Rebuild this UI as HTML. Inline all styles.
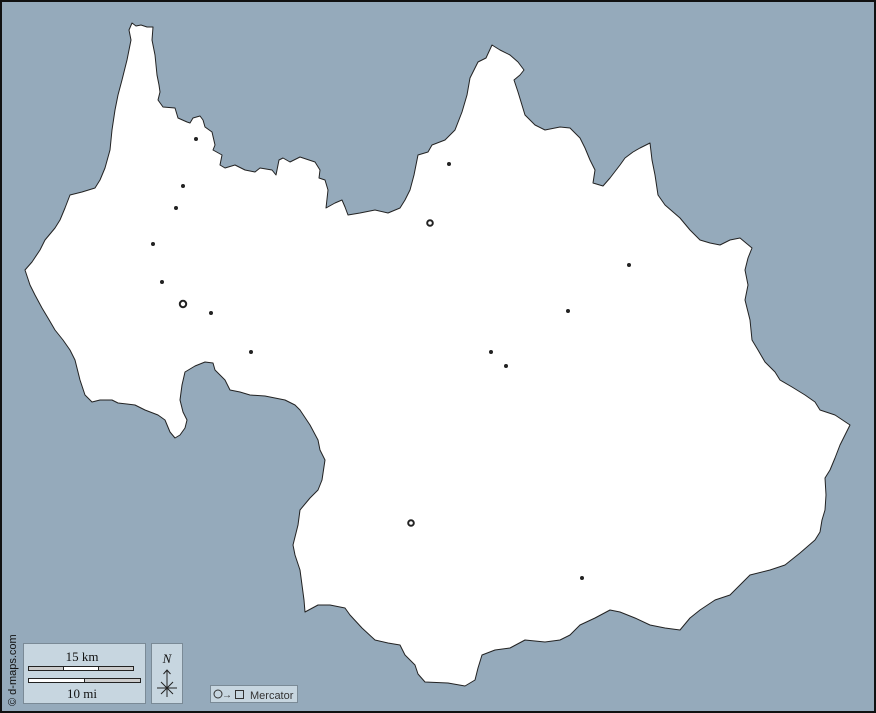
<!DOCTYPE html>
<html><head><meta charset="utf-8"><style>
html,body{margin:0;padding:0;width:876px;height:713px;overflow:hidden;background:#95aabb}
</style></head><body>
<svg width="876" height="713" viewBox="0 0 876 713" xmlns="http://www.w3.org/2000/svg" style="position:absolute;left:0;top:0">
<rect x="0" y="0" width="876" height="713" fill="#95aabb"/>
<polygon fill="#fff" stroke="#222" stroke-width="1" stroke-linejoin="round" points="
132,23 136,26 141,25 147,27 153,27 152,40 155,55 157,75 159,85 160,92 158,100 163,107 175,108 178,118 187,122 190,123 193,118 200,116 203,120 205,127 212,132 215,145 213,150 222,155 220,165 225,168 235,165 245,170 255,172 260,168 272,170 276,175 279,160 283,158 290,162 300,157 315,162 320,170 319,178 325,180 328,190 326,208 335,203 342,200 345,207 348,215 360,213 375,210 388,213 400,208 405,200 410,190 414,175 418,155 428,152 432,145 445,140 455,130 462,112 467,95 470,78 478,62 486,58 492,45 500,50 510,55 518,62 524,70 520,75 514,80 518,92 525,115 535,125 545,130 560,127 570,128 580,138 585,148 590,160 595,170 593,183 603,186 610,178 620,165 625,158 633,152 640,148 650,143 652,160 655,175 658,195 665,205 680,218 690,230 700,240 710,243 720,245 730,240 740,238 752,248 748,258 745,270 748,285 745,300 748,312 750,320 752,340 758,350 765,362 775,372 780,380 792,387 805,395 815,402 820,410 835,415 850,425 845,435 840,445 835,458 830,470 825,478 826,495 825,510 822,520 820,532 815,540 800,553 785,565 770,570 750,575 740,585 730,595 715,600 700,610 690,618 680,630 665,628 650,625 635,618 620,612 610,610 595,618 580,625 570,635 560,640 545,642 525,640 510,648 495,650 482,655 478,668 475,680 465,686 448,683 425,682 418,674 415,665 405,655 400,645 388,643 375,640 362,628 350,615 345,608 330,605 318,605 305,612 304,600 302,585 300,570 295,555 293,545 298,525 300,510 310,498 318,490 322,480 325,460 320,450 318,440 310,425 300,410 295,405 285,400 275,398 265,396 250,395 240,392 230,390 225,380 215,370 213,363 205,362 195,366 185,372 182,385 180,400 183,412 187,420 185,428 180,435 175,438 170,432 165,420 158,415 145,410 135,405 118,403 112,400 100,400 92,402 85,395 80,380 75,360 70,350 63,340 55,330 48,318 42,308 35,295 30,285 25,270 32,262 40,250 45,240 55,228 60,220 65,208 70,195 82,192 95,188 100,180 105,168 110,150 112,130 115,110 118,95 122,80 127,60 131,40 129,30
"/>
<g fill="#222">
<circle cx="196" cy="139" r="2"/><circle cx="183" cy="186" r="2"/><circle cx="176" cy="208" r="2"/><circle cx="153" cy="244" r="2"/><circle cx="162" cy="282" r="2"/><circle cx="211" cy="313" r="2"/><circle cx="251" cy="352" r="2"/><circle cx="449" cy="164" r="2"/><circle cx="629" cy="265" r="2"/><circle cx="568" cy="311" r="2"/><circle cx="491" cy="352" r="2"/><circle cx="506" cy="366" r="2"/><circle cx="582" cy="578" r="2"/>
</g>
<g fill="none" stroke="#222" stroke-width="2">
<circle cx="183" cy="304" r="3.2"/><circle cx="430" cy="223" r="2.8"/><circle cx="411" cy="523" r="2.8"/>
</g>
<rect x="1" y="1" width="874" height="711" fill="none" stroke="#111" stroke-width="2"/>
<!-- scale -->
<rect x="23.5" y="643.5" width="122" height="60" fill="#c7d6e0" stroke="#7a8a96"/>
<text x="82" y="661" font-family="Liberation Serif" font-size="13" text-anchor="middle" fill="#111">15 km</text>
<rect x="28.5" y="666.5" width="105" height="4" fill="#ccc" stroke="#222"/>
<rect x="63.5" y="666.5" width="35" height="4" fill="#fff" stroke="#222"/>
<rect x="28.5" y="678.5" width="112" height="4" fill="#ccc" stroke="#222"/>
<rect x="28.5" y="678.5" width="56" height="4" fill="#fff" stroke="#222"/>
<text x="82" y="698" font-family="Liberation Serif" font-size="13" text-anchor="middle" fill="#111">10 mi</text>
<!-- north -->
<rect x="151.5" y="643.5" width="31" height="60" fill="#c7d6e0" stroke="#7a8a96"/>
<text x="167" y="663" font-family="Liberation Serif" font-style="italic" font-size="13" text-anchor="middle" fill="#111">N</text>
<g stroke="#222" stroke-width="1" fill="none">
<line x1="167" y1="670" x2="167" y2="697"/><path d="M163.5,674 L167,670 L170.5,674"/>
<line x1="157" y1="688" x2="177" y2="688"/><line x1="161" y1="682" x2="173" y2="694"/><line x1="173" y1="682" x2="161" y2="694"/>
</g>
<!-- mercator -->
<rect x="210.5" y="685.5" width="87" height="17" fill="#c7d6e0" stroke="#7a8a96"/>
<circle cx="218" cy="694" r="4" fill="none" stroke="#333"/>
<text x="222" y="698" font-family="Liberation Sans" font-size="10" fill="#333">→</text>
<rect x="235.5" y="690.5" width="8" height="8" fill="none" stroke="#333"/>
<text x="250" y="699" font-family="Liberation Sans" font-size="11" fill="#333">Mercator</text>
<text transform="translate(16,706) rotate(-90)" font-family="Liberation Sans" font-size="11" fill="#111">© d-maps.com</text>
</svg>
</body></html>
